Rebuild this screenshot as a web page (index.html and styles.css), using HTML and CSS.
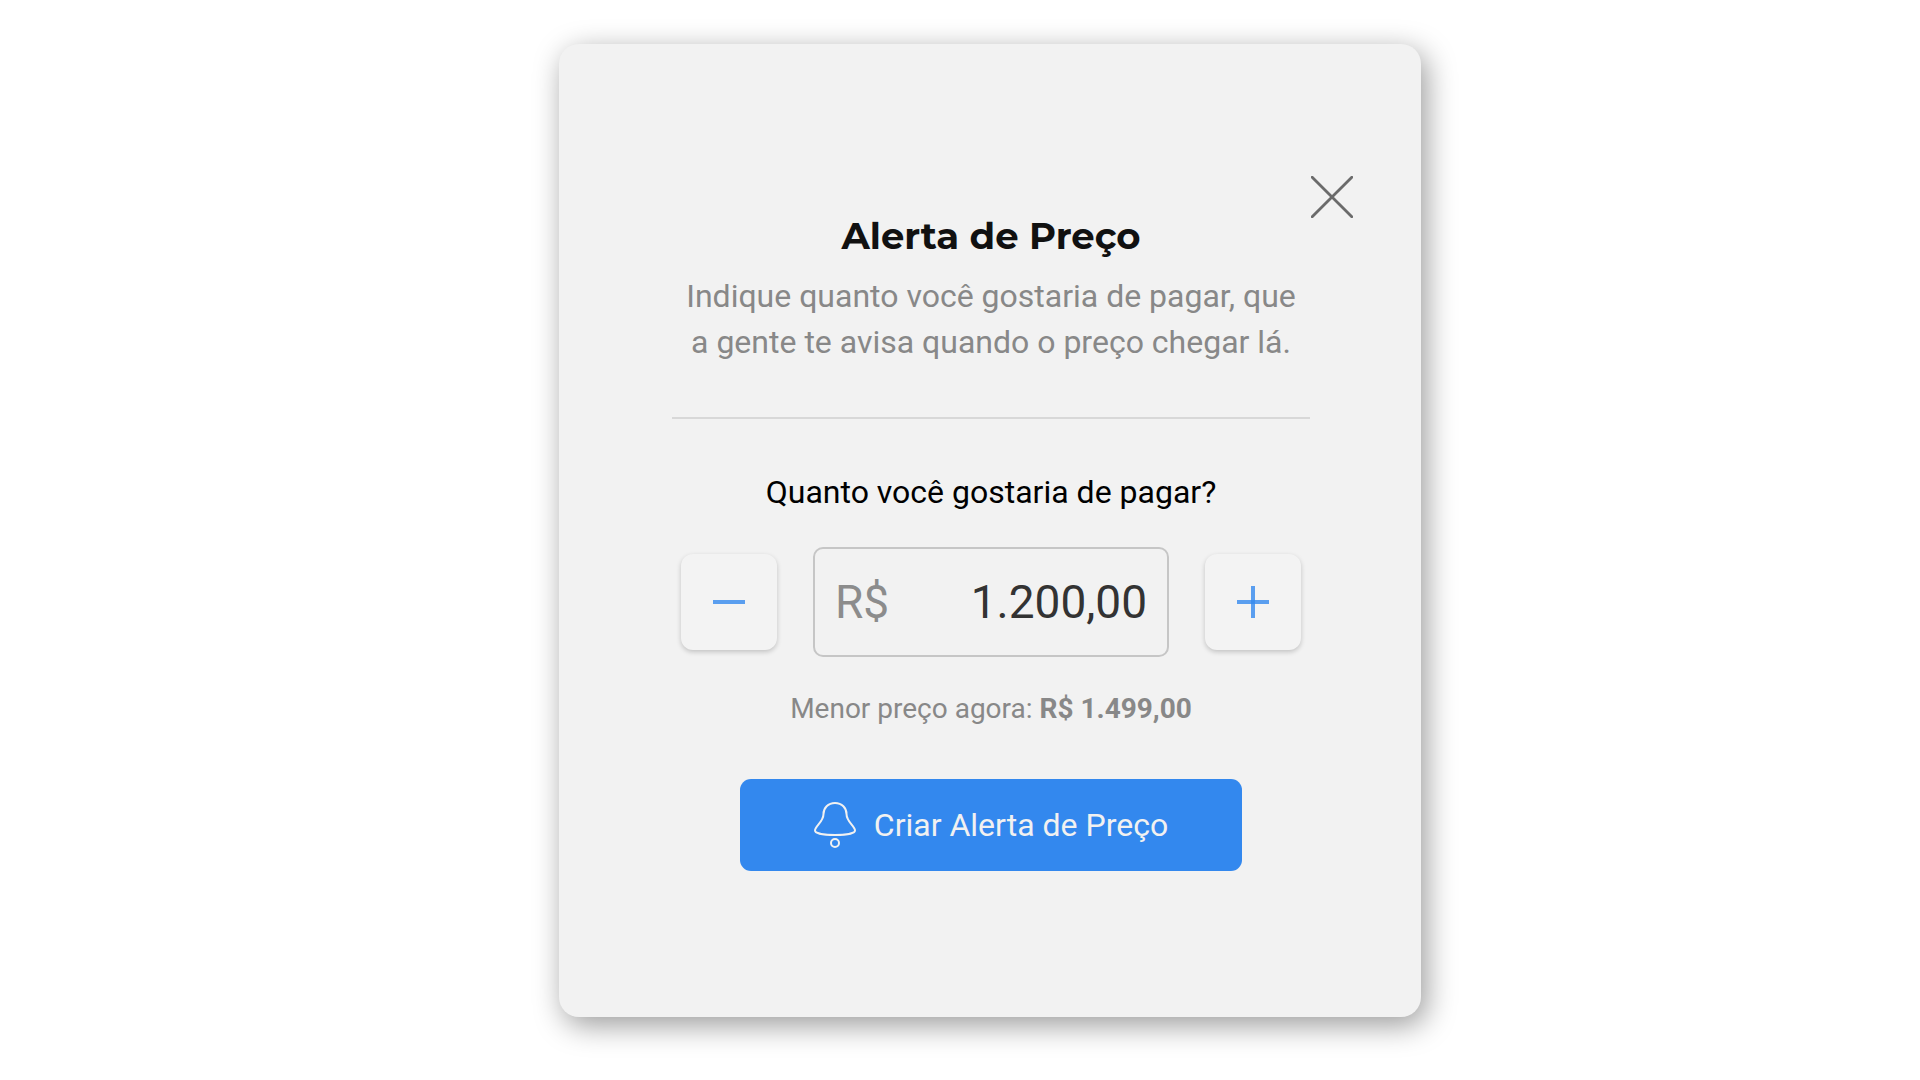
FILE: index.html
```html
<!DOCTYPE html>
<html lang="pt-BR">

<head>
    <meta charset="UTF-8">
    <meta name="viewport" content="width=device-width, initial-scale=1.0">
    <title>Alerta de Preço</title>
    <link rel="stylesheet" href="styles.css">
</head>

<body>

    <main class="card">
        <div class="card-top">
            <button type="button" class="close-button" aria-label="Fechar">
                <svg width="42" height="42" viewBox="0 0 42 42">
                    <path d="M1.200 1.200L40.800 40.800M40.800 1.200L1.200 40.800" fill="none" stroke="#6b6b6b" stroke-width="2.8" stroke-linecap="round" />
                </svg>
            </button>
        </div>

        <form class="alert-form">
            <h1>Alerta de Preço</h1>
            <p class="description">Indique quanto você gostaria de pagar, que a gente te avisa quando o preço chegar lá.</p>

            <hr>

            <label class="question" for="price">Quanto você gostaria de pagar?</label>

            <div class="price-row">
                <button type="button" class="step-button" aria-label="Diminuir">
                    <svg width="32" height="32" viewBox="0 0 32 32">
                        <rect y="14" width="32" height="4" />
                    </svg>
                </button>
                <div class="price-box">
                    <span class="currency">R$</span>
                    <input type="text" id="price" class="price-input" value="1.200,00" inputmode="decimal">
                </div>
                <button type="button" class="step-button" aria-label="Aumentar">
                    <svg width="32" height="32" viewBox="0 0 32 32">
                        <rect y="14" width="32" height="4" />
                        <rect x="14" width="4" height="32" />
                    </svg>
                </button>
            </div>

            <p class="lowest-price">Menor preço agora: <strong>R$ 1.499,00</strong></p>

            <button type="button" class="submit-button">
                <svg width="42" height="46" viewBox="0 0 42 46" fill="none" stroke="currentColor" stroke-width="2">
                    <path d="M21 1C14 1 9.500 6 9.500 12C9.500 20 1 24 1 28.500C1 31.500 11 33 21 33C31 33 41 31.500 41 28.500C41 24 32.500 20 32.500 12C32.500 6 28 1 21 1Z" />
                    <circle cx="21" cy="41" r="4" />
                </svg>
                Criar Alerta de Preço
            </button>
        </form>
    </main>

</body>

</html>
```
FILE: styles.css
```css
/* Global Styling */
* {
    box-sizing: border-box;
}

body {
    margin: 0;
    padding: 44px 0 44px 60px;
    font-family: Roboto, sans-serif;
    font-size: 32px;
    line-height: 46px;
    background-color: #fff;
    color: #000;
}

button,
input {
    font: inherit;
}

button {
    padding: 0;
    border: none;
    cursor: pointer;
}

svg {
    display: block;
}

/* Card */
.card {
    max-width: 862px;
    margin: 0 auto;
    padding: 132px 68px 146px 70px;
    background-color: #f2f2f2;
    border-radius: 20px;
    box-shadow: 5px 8px 30px rgba(0, 0, 0, 0.4);
}

.card-top {
    display: flex;
    justify-content: flex-end;
}

.close-button {
    background: none;
}

/* Form */
.alert-form {
    display: flex;
    flex-direction: column;
    align-items: center;
    max-width: 638px;
    margin: 0 auto;
    text-align: center;
}

h1 {
    margin: 0;
    font-family: Montserrat, Inter, sans-serif;
    font-size: 37px;
    font-weight: 700;
    line-height: 36px;
    color: #111;
}

.description {
    margin: 19px 0 52px;
    padding: 0 8px;
    color: #888;
}

hr {
    width: 100%;
    margin: 0 0 50px;
    border: none;
    border-top: 2px solid #d8d8d8;
}

/* Price */
.price-row {
    display: flex;
    justify-content: center;
    align-items: center;
    gap: 36px;
    margin: 32px 0;
}

.step-button {
    display: flex;
    flex-shrink: 0;
    justify-content: center;
    align-items: center;
    width: 96px;
    height: 96px;
    background-color: #f3f3f3;
    border-radius: 12px;
    box-shadow: 0 2px 5px rgba(0, 0, 0, 0.2);
}

.step-button rect {
    fill: #38e;
    fill-opacity: 0.8;
}

.price-box {
    display: flex;
    align-items: center;
    width: 356px;
    padding: 24px 20px;
    border: 2px solid #c6c6c6;
    border-radius: 10px;
    font-size: 46px;
    line-height: 58px;
}

.currency {
    color: #8c8c8c;
}

.price-input {
    flex: 1;
    min-width: 0;
    padding: 0;
    border: none;
    outline: none;
    background: none;
    color: #333;
    text-align: right;
}

.lowest-price {
    margin: 0 0 50px;
    font-size: 28px;
    line-height: 40px;
    color: #888;
}

/* Submit Button */
.submit-button {
    display: flex;
    justify-content: center;
    align-items: center;
    gap: 18px;
    width: 100%;
    max-width: 502px;
    padding: 23px 0;
    background-color: #38e;
    border-radius: 11px;
    color: #f1f1f1;
}
```
